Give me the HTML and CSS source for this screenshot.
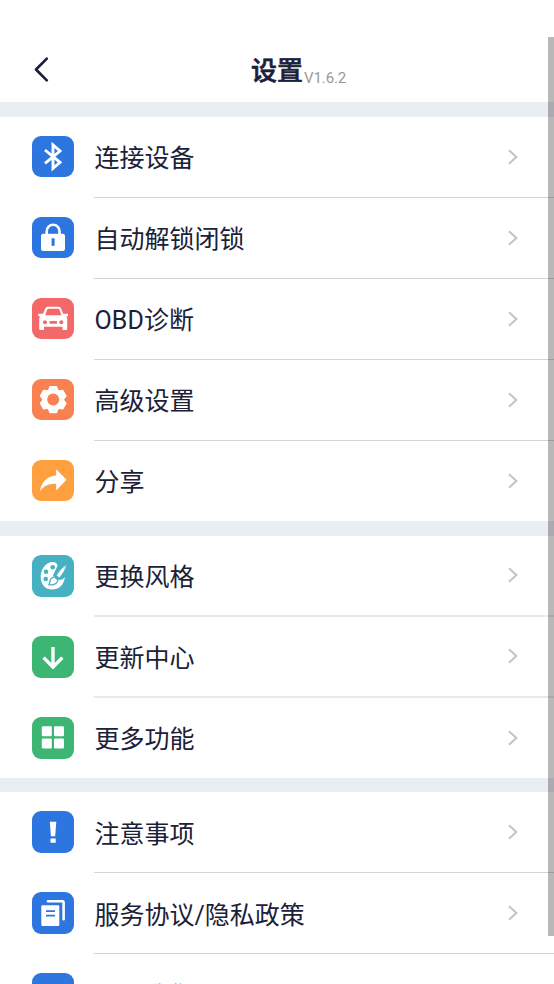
FILE: index.html
```html
<!DOCTYPE html>
<html lang="zh-CN">
<head>
<meta charset="utf-8">
<title>设置</title>
<link rel="stylesheet" href="styles.css">
</head>
<body>
<svg class="defs" width="0" height="0" aria-hidden="true">
  <symbol id="chevron" viewBox="0 0 12 18"><path d="M2 2.200 9.300 9 2 15.800" fill="none" stroke="currentColor" stroke-width="2.100"/></symbol>
</svg>
<div class="screen">
  <header class="header">
    <svg class="back" viewBox="0 0 18 28"><path d="M14.800 3.600 4 14.500l10.800 10.900" fill="none" stroke="currentColor" stroke-width="2.700" stroke-linecap="round" stroke-linejoin="round"/></svg>
    <h1 class="title">设置</h1><span class="version">V1.6.2</span>
  </header>

  <section class="group first">
    <a class="row">
      <svg class="icon blue" viewBox="0 0 42 41"><path d="M13 14 28 26.300 21 32.300V9L28 15 13 27.300" fill="none" stroke="#fff" stroke-width="2.900"/></svg>
      <span class="label">连接设备<svg class="chevron"><use href="#chevron"/></svg></span>
    </a>
    <a class="row">
      <svg class="icon blue" viewBox="0 0 42 41"><path d="M14.700 19v-4.800a6.400 6.400 0 0 1 12.800 0V19" fill="none" stroke="#fff" stroke-width="2.600"/><rect x="9" y="16.700" width="24" height="17.300" rx="2.200" fill="#fff"/><rect class="ink" x="19.600" y="21.300" width="3" height="7.500"/></svg>
      <span class="label">自动解锁闭锁<svg class="chevron"><use href="#chevron"/></svg></span>
    </a>
    <a class="row">
      <svg class="icon red" viewBox="0 0 42 41"><path d="M6.300 15.700h4.700l2.200-5.200Q14 8.700 16 8.700h10.500q2 0 2.600 1.800l2 5.200H36v2.500h-1.800q1 1.200 1 3v10q0 .8-.8.800h-3.200q-.8 0-.8-.8V28.700H12v2.500q0 .8-.8.800H8q-.8 0-.8-.8v-10q0-1.800 1-3H6.300Z" fill="#fff"/><path class="ink" d="m13.200 17.200 1.900-5.400q.3-1.100 1.400-1.100h9.600q1.100 0 1.400 1.100l1.900 5.400Z"/><circle class="ink" cx="13" cy="24.300" r="2"/><circle class="ink" cx="29.300" cy="24.300" r="2"/><rect class="ink" x="17.600" y="23" width="7.400" height="2.700" rx=".6"/></svg>
      <span class="label obd">OBD诊断<svg class="chevron"><use href="#chevron"/></svg></span>
    </a>
    <a class="row">
      <svg class="icon orange" viewBox="0 0 42 41"><g fill="#fff"><circle cx="21.200" cy="20.600" r="11"/><g id="tooth"><path d="m15.900 11.500 1.200-3.600q.3-.9 1.100-.9h6q.8 0 1.100.9l1.200 3.600Z"/><path d="m15.900 29.700 1.200 3.600q.3.900 1.100.9h6q.8 0 1.100-.9l1.200-3.600Z"/></g><use href="#tooth" transform="rotate(60 21.200 20.600)"/><use href="#tooth" transform="rotate(120 21.200 20.600)"/></g><circle class="ink" cx="21.200" cy="20.600" r="6"/></svg>
      <span class="label">高级设置<svg class="chevron"><use href="#chevron"/></svg></span>
    </a>
    <a class="row last">
      <svg class="icon amber" viewBox="0 0 42 41"><path d="M24.200 9.300 34.500 19.700 24.200 30.500v-6.800c-7 0-12 1.300-16.200 7.500C9.200 22 15 16 24.200 15.400Z" fill="#fff"/></svg>
      <span class="label">分享<svg class="chevron"><use href="#chevron"/></svg></span>
    </a>
  </section>

  <section class="group soft">
    <a class="row">
      <svg class="icon teal" viewBox="0 0 42 42"><path d="M25.500 10.800C25.200 7.500 22 6.500 18.500 7.300 12.500 9 8.500 15.500 8.700 22.500 9 30 13.500 34.500 20 34.500c7 0 12-4.500 12.900-12.500-2 2.700-5 3.400-7.500 2.500L21 20.500Z" fill="#fff"/><circle class="ink" cx="20.700" cy="12.300" r="2.300"/><circle class="ink" cx="14" cy="16.700" r="2.300"/><circle class="ink" cx="13.700" cy="24" r="2.300"/><path d="M35 9.200Q28.500 13 24.300 20.400l3 2.500Q32.600 17.500 35 9.200Z" fill="#fff" stroke="#46b1c3" stroke-width=".8"/><path d="M22.300 21.800q-3.500.5-4.200 4-.4 2.500-1.300 4 7.500.8 9.200-4.700Z" fill="#fff" stroke="#46b1c3" stroke-width="1.300" stroke-linejoin="round"/></svg>
      <span class="label">更换风格<svg class="chevron"><use href="#chevron"/></svg></span>
    </a>
    <a class="row">
      <svg class="icon green" viewBox="0 0 42 42"><path d="M21 11V31M11.600 21.600 21 31 30.400 21.600" fill="none" stroke="#fff" stroke-width="3.400"/></svg>
      <span class="label">更新中心<svg class="chevron"><use href="#chevron"/></svg></span>
    </a>
    <a class="row last">
      <svg class="icon green" viewBox="0 0 42 42"><g fill="#fff"><rect x="9.800" y="9.300" width="10" height="10" rx="1.300"/><rect x="22" y="9.300" width="10" height="10" rx="1.300"/><rect x="9.800" y="21.500" width="10" height="10" rx="1.300"/><rect x="22" y="21.500" width="10" height="10" rx="1.300"/></g></svg>
      <span class="label">更多功能<svg class="chevron"><use href="#chevron"/></svg></span>
    </a>
  </section>

  <section class="group third">
    <a class="row">
      <svg class="icon blue" viewBox="0 0 42 42"><path d="M17.800 10.700h6.500l-1.100 14.600h-4.300ZM18.500 27.500h5.200v4.300h-5.200Z" fill="#fff"/></svg>
      <span class="label">注意事项<svg class="chevron"><use href="#chevron"/></svg></span>
    </a>
    <a class="row">
      <svg class="icon blue" viewBox="0 0 42 42"><path d="M16 9.200h14.500q1.100 0 1.100 1.100v16.900" fill="none" stroke="#fff" stroke-width="2.600" stroke-linecap="round"/><rect x="9.300" y="13.300" width="18" height="20.700" rx="1.200" fill="#fff"/><path d="M14 19.200h9M14 23.700h9" fill="none" stroke="#2d76e0" stroke-width="1.800"/></svg>
      <span class="label">服务协议/隐私政策<svg class="chevron"><use href="#chevron"/></svg></span>
    </a>
    <a class="row last">
      <svg class="icon blue" viewBox="0 0 42 42"><circle cx="21" cy="21" r="9" fill="#fff"/></svg>
      <span class="label">关于我们<svg class="chevron"><use href="#chevron"/></svg></span>
    </a>
  </section>
</div>
<div class="scrollbar"></div>
</body>
</html>
```
FILE: styles.css
```css
* { box-sizing: border-box; }
html, body { margin: 0; height: 984px; overflow: hidden; }
body {
  position: relative;
  background: #fff;
  color: #1a2138;
  font-family: Roboto, "Noto Sans CJK SC", sans-serif;
}
.defs { position: absolute; }
.screen { height: 984px; overflow: hidden; background: #eaeef1; }
.header {
  display: flex;
  align-items: center;
  height: 102px;
  padding: 36px 0 0 32px;
  background: #fff;
}
.back { width: 18px; height: 28px; flex: none; }
.title {
  margin: 4px 0 0 201px;
  font-size: 26px;
  line-height: 36px;
  font-weight: 500;
  -webkit-text-stroke: .6px currentColor;
}
.version { margin: 17px 0 0 1px; font-size: 15px; line-height: 20px; letter-spacing: -.1px; color: #999; }
.group { margin-top: 15px; background: #fff; }
.group.third { margin-top: 14px; }
.row { display: flex; height: 81px; padding-left: 32px; }
.row.last { height: 80px; }
.icon { flex: none; width: 42px; height: 42px; margin: 19px 20px 0 0; border-radius: 9px; }
.first .icon { height: 41px; }
.label {
  flex: 1;
  display: flex;
  align-items: center;
  justify-content: space-between;
  padding: 3px 35px 0 .5px;
  border-bottom: 1px solid #d3d4d5;
  font-size: 25px;
  line-height: 36px;
}
.label.obd { letter-spacing: .1px; }
.soft .label { padding-top: 5px; border-bottom: 2px solid #e8e9e9; }
.third .label { padding-top: 5px; }
.row.last .label { border-bottom: 0; }
.soft .row.last .label { padding-top: 3px; }
.third .row.last .label { padding-top: 5px; }
.chevron { width: 12px; height: 18px; flex: none; margin-bottom: 4px; color: #c4c5cb; }
.soft .row:not(.last) .chevron, .third .chevron { margin-bottom: 6px; }
.blue { background: #2d76e0; }
.red { background: #f36869; }
.orange { background: #f98050; }
.amber { background: #ffa040; }
.teal { background: #46b1c3; }
.green { background: #3db673; }
.blue .ink { fill: #2d76e0; }
.red .ink { fill: #f36869; }
.orange .ink { fill: #f98050; }
.teal .ink { fill: #46b1c3; }
.scrollbar { position: absolute; top: 37px; right: 0; width: 6px; height: 899px; background: rgba(0, 0, 0, .28); }
```
